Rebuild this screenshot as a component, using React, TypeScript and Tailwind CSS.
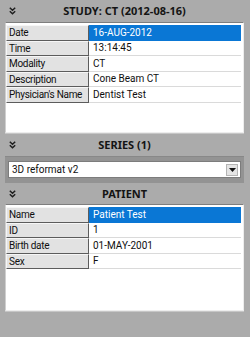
import React from "react";

function Chevrons() {
  return (
    <svg width="7" height="8" viewBox="0 0 7 8" className="shrink-0">
      <polyline points="0.8,0.8 3.5,3.3 6.2,0.8" fill="none" stroke="#1e1e1e" strokeWidth="1.5" />
      <polyline points="0.8,4.3 3.5,6.8 6.2,4.3" fill="none" stroke="#1e1e1e" strokeWidth="1.5" />
    </svg>
  );
}

function Header({ title, h }: { title: string; h: string }) {
  return (
    <div className={`grid grid-cols-[20px_1fr_20px] items-center ${h}`}>
      <div className="flex justify-start pl-[4px]">
        <Chevrons />
      </div>
      <div
        className="text-center font-bold text-[11px] leading-[14px] text-[#141414] whitespace-nowrap"
        style={{ fontFamily: '"Noto Sans", "Open Sans", sans-serif' }}
      >
        {title}
      </div>
      <div />
    </div>
  );
}

type Row = { k: string; v: string; sel?: boolean };

function Table({ rows, h }: { rows: Row[]; h: string }) {
  return (
    <div className="flex flex-col">
      <div
        className={`${h} bg-white border-t border-l border-t-[#7e7e7e] border-l-[#cfcfcf] border-r border-b border-r-[#ededed] border-b-[#ededed] pt-[2px] pr-[2px]`}
      >
        {rows.map((r) => (
          <div key={r.k} className="flex h-[15.5px]">
            <div className="w-[83px] flex items-center bg-[#e2e2e2] border-t border-l border-t-[#f6f6f6] border-l-[#f6f6f6] border-b border-r border-b-[#5c5c5c] border-r-[#5c5c5c] pl-[2px] text-[10px] tracking-[-0.3px] text-[#0f0f0f] whitespace-nowrap overflow-hidden">
              {r.k}
            </div>
            <div
              className={`flex-1 flex items-center pl-[4px] text-[10px] whitespace-nowrap border-b ${
                r.sel ? "bg-[#0a77d5] text-white border-b-[#0a77d5]" : "bg-white text-[#0f0f0f] border-b-[#dadada]"
              }`}
            >
              {r.v}
            </div>
          </div>
        ))}
      </div>
      <div className="h-[1px] bg-[#c6c6c6]" />
    </div>
  );
}

export default function App() {
  return (
    <div
      className="w-[250px] h-[337px] bg-[#ababab] flex flex-col pl-[5px] pr-[6px] overflow-hidden"
      style={{ fontFamily: 'Roboto, "Noto Sans", sans-serif' }}
    >
      <Header title="STUDY: CT (2012-08-16)" h="h-[22px]" />
      <Table
        h="h-[111px]"
        rows={[
          { k: "Date", v: "16-AUG-2012", sel: true },
          { k: "Time", v: "13:14:45" },
          { k: "Modality", v: "CT" },
          { k: "Description", v: "Cone Beam CT" },
          { k: "Physician's Name", v: "Dentist Test" },
        ]}
      />
      <Header title="SERIES (1)" h="h-[22px]" />
      <div className="h-[27px] bg-[#939393] border-t border-t-[#888888] px-[3px] pt-[4px]">
        <div className="h-[17px] bg-white border border-[#7c7c7c] flex items-center">
          <div className="flex-1 pl-[3px] text-[10px] text-[#0f0f0f] leading-[14px]">3D reformat v2</div>
          <div className="w-[12px] h-[12px] mr-[2px] bg-[#e4e4e4] border border-[#b4b4b4] flex items-center justify-center">
            <svg width="7" height="4" viewBox="0 0 7 4">
              <polygon points="0,0 7,0 3.5,4" fill="#111" />
            </svg>
          </div>
        </div>
      </div>
      <Header title="PATIENT" h="h-[21px]" />
      <Table
        h="h-[107px]"
        rows={[
          { k: "Name", v: "Patient Test", sel: true },
          { k: "ID", v: "1" },
          { k: "Birth date", v: "01-MAY-2001" },
          { k: "Sex", v: "F" },
        ]}
      />
    </div>
  );
}
